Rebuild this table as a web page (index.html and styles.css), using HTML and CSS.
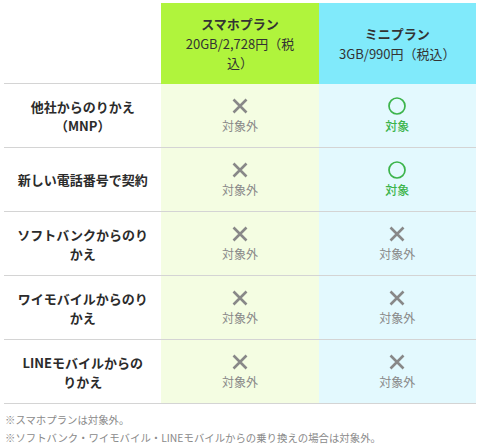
FILE: index.html
```html
<!DOCTYPE html>
<html lang="ja">
<head>
<meta charset="utf-8">
<link rel="stylesheet" href="styles.css">
</head>
<body>
<div class="page">
  <div class="compare">
    <div class="row head">
      <div class="cell label"></div>
      <div class="cell plan smaho"><strong>スマホプラン</strong><span>20GB/2,728円（税込）</span></div>
      <div class="cell plan mini"><strong>ミニプラン</strong><span>3GB/990円（税込）</span></div>
    </div>
    <div class="row">
      <div class="cell label">他社からのりかえ（MNP）</div>
      <div class="cell smaho-b"><svg class="ico" viewBox="0 0 18 18"><path d="M2.5 2.5L15.5 15.5M15.5 2.5L2.5 15.5"/></svg><span class="ng">対象外</span></div>
      <div class="cell mini-b"><svg class="ico ok" viewBox="0 0 18 18"><circle cx="9" cy="9" r="8"/></svg><span class="okt">対象</span></div>
    </div>
    <div class="row">
      <div class="cell label">新しい電話番号で契約</div>
      <div class="cell smaho-b"><svg class="ico" viewBox="0 0 18 18"><path d="M2.5 2.5L15.5 15.5M15.5 2.5L2.5 15.5"/></svg><span class="ng">対象外</span></div>
      <div class="cell mini-b"><svg class="ico ok" viewBox="0 0 18 18"><circle cx="9" cy="9" r="8"/></svg><span class="okt">対象</span></div>
    </div>
    <div class="row">
      <div class="cell label">ソフトバンクからのりかえ</div>
      <div class="cell smaho-b"><svg class="ico" viewBox="0 0 18 18"><path d="M2.5 2.5L15.5 15.5M15.5 2.5L2.5 15.5"/></svg><span class="ng">対象外</span></div>
      <div class="cell mini-b"><svg class="ico" viewBox="0 0 18 18"><path d="M2.5 2.5L15.5 15.5M15.5 2.5L2.5 15.5"/></svg><span class="ng">対象外</span></div>
    </div>
    <div class="row">
      <div class="cell label">ワイモバイルからのりかえ</div>
      <div class="cell smaho-b"><svg class="ico" viewBox="0 0 18 18"><path d="M2.5 2.5L15.5 15.5M15.5 2.5L2.5 15.5"/></svg><span class="ng">対象外</span></div>
      <div class="cell mini-b"><svg class="ico" viewBox="0 0 18 18"><path d="M2.5 2.5L15.5 15.5M15.5 2.5L2.5 15.5"/></svg><span class="ng">対象外</span></div>
    </div>
    <div class="row">
      <div class="cell label">LINEモバイルからの<br>りかえ</div>
      <div class="cell smaho-b"><svg class="ico" viewBox="0 0 18 18"><path d="M2.5 2.5L15.5 15.5M15.5 2.5L2.5 15.5"/></svg><span class="ng">対象外</span></div>
      <div class="cell mini-b"><svg class="ico" viewBox="0 0 18 18"><path d="M2.5 2.5L15.5 15.5M15.5 2.5L2.5 15.5"/></svg><span class="ng">対象外</span></div>
    </div>
  </div>
  <div class="notes">
    <p>※スマホプランは対象外。</p>
    <p>※ソフトバンク・ワイモバイル・LINEモバイルからの乗り換えの場合は対象外。</p>
  </div>
</div>
</body>
</html>
```
FILE: styles.css
```css
* { box-sizing: border-box; }
body {
  margin: 0;
  background: #fff;
  font-family: "Noto Sans CJK JP", "Noto Sans", sans-serif;
  color: #333;
}
.page {
  padding: 3px 4px 0 4px;
}
.compare {
  display: flex;
  flex-direction: column;
}
.row {
  display: grid;
  grid-template-columns: 1fr 1fr 1fr;
}
.cell {
  height: 64px;
  display: flex;
  flex-direction: column;
  align-items: center;
  justify-content: center;
  text-align: center;
  border-bottom: 1px solid #d4d4d4;
}
.head .cell { height: 81px; }
.head .plan { border-bottom: none; }
.label {
  display: block;
  padding: 12px 10px 0;
  font-size: 13px;
  font-weight: 700;
  line-height: 19px;
  color: #2b2b2b;
}
.row:not(.head) .label {
  display: flex;
  padding: 0 10px;
}
.plan {
  font-size: 13px;
  line-height: 19.5px;
  padding: 0 18px;
  color: #333;
}
.plan strong { font-weight: 700; }
.smaho { background: #b0f43c; }
.mini { background: #80eafb; }
.smaho-b { background: #f4fde2; }
.mini-b { background: #e3f9fe; }
.ico {
  width: 18px;
  height: 18px;
  fill: none;
  stroke: #888;
  stroke-width: 2.6;
  margin-bottom: 2px;
}
.ico.ok {
  stroke: #3cb44b;
  stroke-width: 1.7;
}
.ng {
  font-size: 12px;
  line-height: 18px;
  color: #888;
}
.okt {
  font-size: 12px;
  line-height: 18px;
  color: #3cb44b;
  font-weight: 500;
}
.notes {
  padding: 7px 1px 0;
}
.notes p {
  margin: 0;
  font-size: 10.4px;
  line-height: 18px;
  color: #8a8a8a;
}
```
